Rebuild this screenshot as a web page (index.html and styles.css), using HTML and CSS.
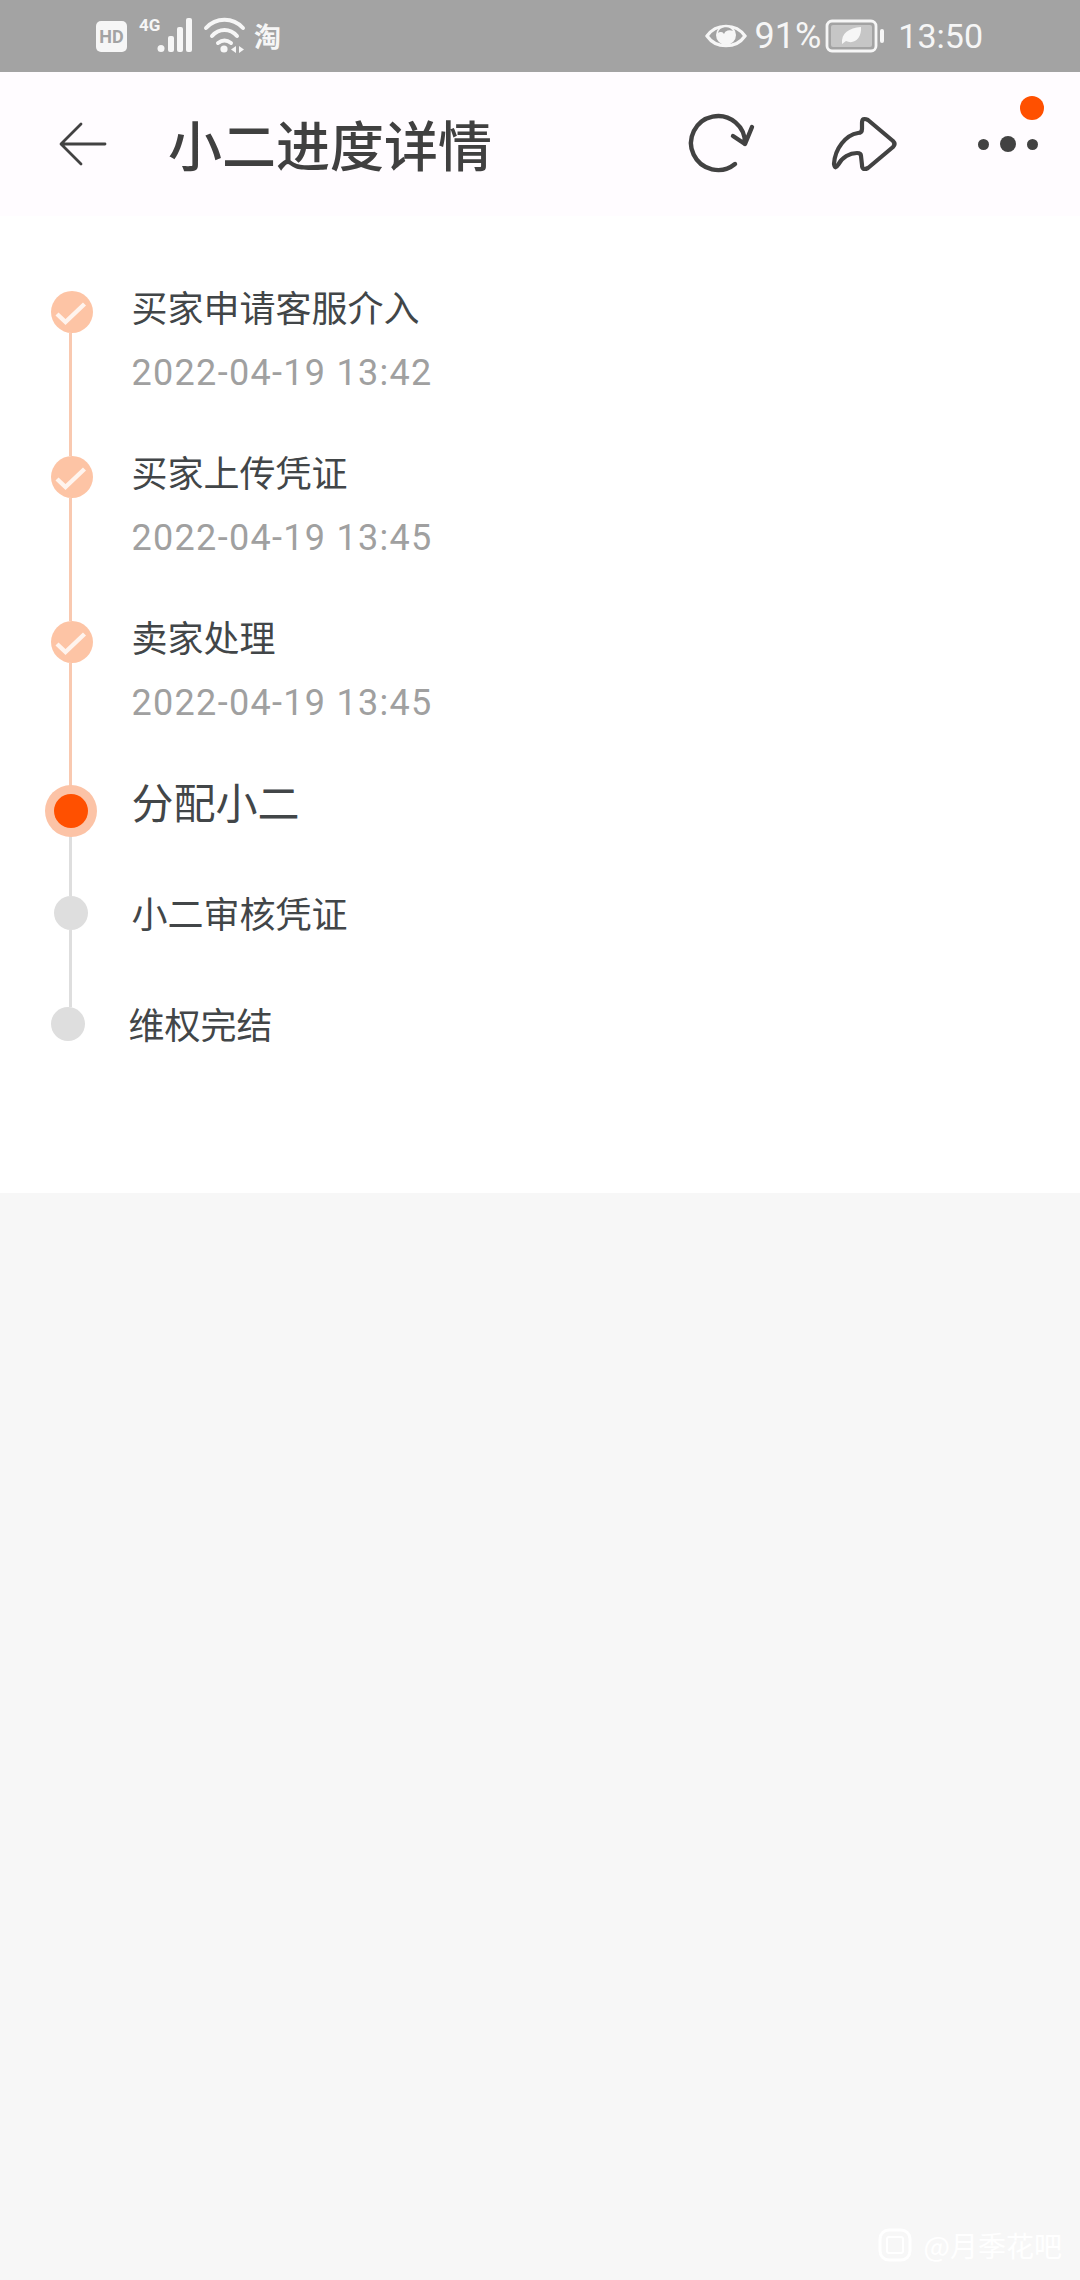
FILE: index.html
```html
<!DOCTYPE html>
<html lang="zh-CN">
<head>
<meta charset="utf-8">
<title>小二进度详情</title>
<link rel="stylesheet" href="styles.css">
</head>
<body>
<div class="page">
  <div class="statusbar">
    <div class="status-left">
      <span class="hd">HD</span>
      <span class="net">4G</span>
      <svg class="signal" width="36" height="40" viewBox="0 0 36 40">
        <circle cx="4" cy="33.500" r="3.500"/>
        <rect x="11" y="21" width="6" height="16" rx="2"/>
        <rect x="20" y="12" width="6" height="25" rx="2"/>
        <rect x="29" y="3" width="6" height="34" rx="2"/>
      </svg>
      <svg class="wifi" width="44" height="40" viewBox="0 0 44 40">
        <path d="M3 12C13 1 30 1 40 12M9 20C16 12 27 12 34 20M15 27C19 24 24 24 28 27" fill="none" stroke="#f6f6f6" stroke-width="4" stroke-linecap="round"/>
        <circle cx="21" cy="33" r="3.600" fill="#f6f6f6"/>
        <path d="M33 30v7l-5-3.500zM36 30v7l5-3.500z" fill="#f6f6f6"/>
      </svg>
      <span class="app-mark">淘</span>
    </div>
    <div class="status-right">
      <svg class="eye" width="42" height="30" viewBox="0 0 42 30">
        <path d="M2 15C11 2 31 2 40 15C31 28 11 28 2 15Z" fill="none" stroke="#f6f6f6" stroke-width="3.200"/>
        <circle cx="21" cy="14" r="10" fill="#f6f6f6"/>
        <path d="M13 12a8 7 0 0 1 15-2a6 5 0 0 0-9 3a4 4 0 0 0-6-1z" fill="#a3a3a3"/>
      </svg>
      <span class="percent">91%</span>
      <svg class="battery" width="60" height="34" viewBox="0 0 60 34">
        <rect x="2" y="2" width="49" height="30" rx="5" fill="none" stroke="#f6f6f6" stroke-width="2.800"/>
        <rect x="6" y="6" width="41" height="22" rx="2" fill="#c6c6c6"/>
        <path d="M17 25C16 14 24 9 36 8C37 19 29 26 21 22Z" fill="#f6f6f6"/>
        <rect x="55" y="10" width="4" height="14" rx="2" fill="#f6f6f6"/>
      </svg>
      <span class="clock">13:50</span>
    </div>
  </div>

  <header class="topbar">
    <svg class="back" width="50" height="48" viewBox="0 0 50 48">
      <path d="M47 24H4M23 4L3 24L23 44" fill="none" stroke="#424242" stroke-width="2.800" stroke-linecap="round" stroke-linejoin="round"/>
    </svg>
    <h1 class="title">小二进度详情</h1>
    <svg class="tool" width="80" height="80" viewBox="0 0 80 80">
      <path d="M55 60A27 27 0 1 1 65 40M72 23L65 40L53 32" fill="none" stroke="#424242" stroke-width="4.400" stroke-linecap="round" stroke-linejoin="round"/>
    </svg>
    <svg class="tool share" width="80" height="80" viewBox="0 0 80 80">
      <path d="M37 19Q37 13 43 16L68 37Q71 40 68 43L43 64Q37 67 37 61L36 52Q36 49 32 49C25 49 17 53 13 61Q10 66 9 60C10 44 21 31 33 29Q37 29 37 25Z" fill="none" stroke="#424242" stroke-width="4.200" stroke-linejoin="round"/>
    </svg>
    <div class="more">
      <span class="dot"></span>
      <span class="dot dot-big"></span>
      <span class="dot"></span>
      <span class="badge"></span>
    </div>
  </header>

  <main class="panel">
    <ol class="timeline">
      <li class="step step-done">
        <div class="rail">
          <span class="node"><svg width="42" height="42" viewBox="0 0 42 42"><path d="M6 23L14.500 31L33.500 13" fill="none" stroke="#fff4ee" stroke-width="4.400"/></svg></span>
          <span class="line"></span>
        </div>
        <div class="body">
          <p class="name">买家申请客服介入</p>
          <p class="time">2022-04-19 13:42</p>
        </div>
      </li>
      <li class="step step-done">
        <div class="rail">
          <span class="node"><svg width="42" height="42" viewBox="0 0 42 42"><path d="M6 23L14.500 31L33.500 13" fill="none" stroke="#fff4ee" stroke-width="4.400"/></svg></span>
          <span class="line"></span>
        </div>
        <div class="body">
          <p class="name">买家上传凭证</p>
          <p class="time">2022-04-19 13:45</p>
        </div>
      </li>
      <li class="step step-done step-before-active">
        <div class="rail">
          <span class="node"><svg width="42" height="42" viewBox="0 0 42 42"><path d="M6 23L14.500 31L33.500 13" fill="none" stroke="#fff4ee" stroke-width="4.400"/></svg></span>
          <span class="line"></span>
        </div>
        <div class="body">
          <p class="name">卖家处理</p>
          <p class="time">2022-04-19 13:45</p>
        </div>
      </li>
      <li class="step step-active">
        <div class="rail">
          <span class="node"></span>
          <span class="line"></span>
        </div>
        <div class="body">
          <p class="name">分配小二</p>
        </div>
      </li>
      <li class="step step-todo">
        <div class="rail">
          <span class="node"></span>
          <span class="line"></span>
        </div>
        <div class="body">
          <p class="name">小二审核凭证</p>
        </div>
      </li>
      <li class="step step-last">
        <div class="rail">
          <span class="node"></span>
        </div>
        <div class="body">
          <p class="name">维权完结</p>
        </div>
      </li>
    </ol>
  </main>

  <div class="watermark">
    <svg width="34" height="34" viewBox="0 0 34 34">
      <rect x="2" y="2" width="30" height="30" rx="9" fill="none" stroke="#fff" stroke-width="3"/>
      <rect x="9" y="9" width="16" height="16" rx="2" fill="none" stroke="#fff" stroke-width="2"/>
    </svg>
    <span>@月季花吧</span>
  </div>
</div>
</body>
</html>
```

FILE: styles.css
```css
* {
  box-sizing: border-box;
}

html,
body {
  margin: 0;
  padding: 0;
}

body {
  font-family: Roboto, "Noto Sans CJK SC", sans-serif;
  color: #424648;
}

.page {
  position: relative;
  width: 1080px;
  height: 2280px;
  overflow: hidden;
  background: #f7f7f7;
}

/* system status bar */
.statusbar {
  height: 72px;
  background: #a3a3a3;
  color: #f6f6f6;
  display: flex;
  justify-content: space-between;
  align-items: center;
  padding: 0 97px 0 96px;
}

.status-left,
.status-right {
  display: flex;
  align-items: center;
}

.hd {
  width: 31px;
  height: 31px;
  border-radius: 5px;
  background: #f6f6f6;
  color: #a3a3a3;
  font: 700 18px/31px Roboto, sans-serif;
  text-align: center;
}

.net {
  font: 700 17px/18px Roboto, sans-serif;
  margin: -22px 0 0 12px;
  width: 20px;
}

.signal {
  fill: #f6f6f6;
  margin: -2px 0 0 -2px;
}

.wifi {
  margin: 0 0 0 10px;
}

.app-mark {
  font: 700 27px/30px "Noto Sans CJK SC", sans-serif;
  margin-left: 7px;
}

.eye {
  margin-right: 7px;
}

.percent {
  font-size: 36px;
  line-height: 40px;
}

.battery {
  margin: 0 13px 0 4px;
}

.clock {
  font-size: 34px;
  line-height: 40px;
}

/* page header */
.topbar {
  position: relative;
  height: 144px;
  background: #fffcff;
  display: flex;
  align-items: center;
  padding: 0 42px 0 58px;
}

.back {
  flex: none;
}

.title {
  margin: 0 0 0 60px;
  flex: 1;
  font: 500 54px/70px "Noto Sans CJK SC", sans-serif;
  color: #404040;
}

.tool {
  flex: none;
  margin-right: 65px;
}

.share {
  margin-right: 73px;
}

.more {
  position: relative;
  width: 60px;
  display: flex;
  justify-content: space-between;
  align-items: center;
  flex: none;
}

.dot {
  width: 11px;
  height: 11px;
  border-radius: 50%;
  background: #424242;
}

.dot-big {
  width: 16px;
  height: 16px;
}

.badge {
  position: absolute;
  top: -40px;
  right: -6px;
  width: 24px;
  height: 24px;
  border-radius: 50%;
  background: #ff5000;
}

/* progress timeline */
.panel {
  height: 977px;
  background: #fff;
  padding: 68px 0 0 46px;
}

.timeline {
  list-style: none;
  margin: 0;
  padding: 0;
}

.step {
  display: flex;
}

.step-done {
  height: 165px;
}

.step-before-active {
  height: 169px;
}

.step-active {
  height: 102px;
}

.step-todo {
  height: 111px;
}

.step-last {
  margin-left: -3px;
}

/* the rail overhangs its row so the connector reaches the next node */
.rail {
  width: 49px;
  flex: none;
  display: flex;
  flex-direction: column;
  align-items: center;
  padding-top: 7px;
  margin-bottom: -7px;
}

.step-before-active .rail {
  margin-bottom: -11px;
}

.step-active .rail,
.step-todo .rail,
.step-last .rail {
  padding-top: 11px;
  margin-bottom: -11px;
}

.node {
  flex: none;
  display: block;
  width: 42px;
  height: 42px;
  margin-left: 2px;
  border-radius: 50%;
  background: #fdc4a5;
}

.node svg {
  display: block;
}

.line {
  flex: 1;
  width: 3px;
  background: #f9c9b0;
}

.step-active .node,
.step-todo .node,
.step-last .node {
  width: 34px;
  height: 34px;
  margin-left: 0;
  background: #dedede;
}

.step-active .node {
  background: #ff5000;
  box-shadow: 0 0 0 9px #fcc3a6;
  position: relative;
}

.step-active .line,
.step-todo .line {
  background: #dedede;
}

.body {
  margin-left: 36.500px;
}

.name {
  margin: -2px 0 0;
  font: 400 36px/48px "Noto Sans CJK SC", sans-serif;
  color: #424648;
}

.time {
  margin: 19px 0 0;
  font: 400 36px/48px Roboto, sans-serif;
  letter-spacing: 1.300px;
  color: #a0a0a0;
}

.step-active .name {
  margin-top: -10px;
  font-size: 42px;
  line-height: 56px;
}

.step-todo .name,
.step-last .name {
  margin-top: 3px;
}

.watermark {
  position: absolute;
  right: 18px;
  bottom: 18px;
  display: flex;
  align-items: center;
  gap: 12px;
  color: #fff;
  font: 400 28px/34px "Noto Sans CJK SC", sans-serif;
}
```
